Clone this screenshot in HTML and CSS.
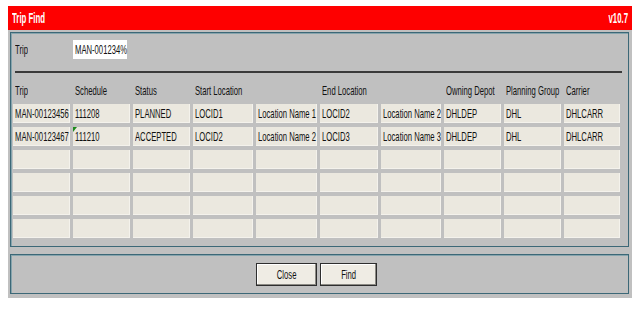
FILE: index.html
```html
<!DOCTYPE html>
<html lang="en">
<head>
  <meta charset="UTF-8">
  <title>Trip Find</title>
  <link rel="stylesheet" href="styles.css">
</head>
<body>

  <div class="window">
    <div class="titlebar">
      <span class="t">Trip Find</span>
      <span class="t right">v10.7</span>
    </div>

    <div class="client">
      <div class="panel search-panel">
        <div class="search-row">
          <label class="search-label"><span class="t">Trip</span></label>
          <div class="search-input"><span class="t">MAN-001234%</span></div>
        </div>

        <div class="separator"></div>

        <div class="grid head">
          <div class="h"><span class="t">Trip</span></div>
          <div class="h"><span class="t">Schedule</span></div>
          <div class="h"><span class="t">Status</span></div>
          <div class="h span2"><span class="t">Start Location</span></div>
          <div class="h span2"><span class="t">End Location</span></div>
          <div class="h"><span class="t">Owning Depot</span></div>
          <div class="h"><span class="t">Planning Group</span></div>
          <div class="h"><span class="t">Carrier</span></div>
        </div>

        <div class="grid rows" id="rows"></div>
      </div>

      <div class="panel button-panel">
        <button class="btn close"><span class="t mid">Close</span></button>
        <button class="btn find"><span class="t mid">Find</span></button>
      </div>
    </div>
  </div>

  <script>
    const trips = [
      ["MAN-00123456", "111208", "PLANNED", "LOCID1", "Location Name 1", "LOCID2", "Location Name 2", "DHLDEP", "DHL", "DHLCARR"],
      ["MAN-00123467", "111210", "ACCEPTED", "LOCID2", "Location Name 2", "LOCID3", "Location Name 3", "DHLDEP", "DHL", "DHLCARR"]
    ];
    const rowsEl = document.getElementById("rows");

    for (let r = 0; r < 6; r++) {
      for (let c = 0; c < 10; c++) {
        const cell = document.createElement("div");
        cell.className = "cell";
        const value = trips[r] ? trips[r][c] : "";
        if (value) {
          cell.innerHTML = `<span class="t">${value}</span>`;
        }
        // little green marker like the original grid
        if (r === 1 && c === 1) cell.classList.add("flag");
        rowsEl.appendChild(cell);
      }
    }
  </script>

</body>
</html>
```

FILE: styles.css
```css
body {
  margin: 0;
  padding: 6px 0 0 8px;
  background: #fff;
  font-family: "Liberation Sans", Arial, sans-serif;
  font-size: 13px;
  color: #111;
}

/* text in the original is very narrow */
.t {
  display: inline-block;
  white-space: nowrap;
  transform: scaleX(0.59);
  transform-origin: 0 50%;
}

.t.right {
  transform-origin: 100% 50%;
}

.t.mid {
  transform-origin: 50% 50%;
}

.window {
  width: 624px;
}

.titlebar {
  height: 24px;
  background: #fe0000;
  color: #fff;
  font-weight: bold;
  font-size: 14px;
  display: flex;
  justify-content: space-between;
  align-items: center;
  padding: 0 4px;
  box-sizing: border-box;
}

.titlebar .t {
  transform: scaleX(0.56);
}

.client {
  background: #c0c0c0;
  padding: 2px 3px 4px 2px;
}

.panel {
  border: 1px solid #3c6877;
  box-shadow: inset 1px 1px 0 #86a4ad;
}

.search-panel {
  padding: 7px 6px 8px 2px;
}

.search-row {
  display: flex;
  align-items: center;
  height: 19px;
  padding-left: 2px;
}

.search-label {
  width: 60px;
}

.search-input {
  width: 52px;
  height: 19px;
  background: #fff;
  padding-left: 2px;
  line-height: 19px;
  margin-left: -2px;
}

.separator {
  height: 2px;
  background: #3a3a3a;
  margin: 12px 0 0 2px;
}

.grid {
  display: grid;
  grid-template-columns: 57px 57px 57px 60px 61px 58px 60px 57px 57px 56px;
  column-gap: 3px;
}

.head {
  margin: 11px 0 6px;
  height: 14px;
  line-height: 14px;
}

.h {
  padding-left: 2px;
}

.span2 {
  grid-column: span 2;
}

.rows {
  row-gap: 4px;
}

.cell {
  position: relative;
  height: 19px;
  line-height: 19px;
  background: #ebe8df;
  box-shadow: inset 0 -1px 0 #f4f2ec, inset -1px 0 0 #f4f2ec;
  padding-left: 2px;
  overflow: hidden;
}

.cell.flag::before {
  content: "";
  position: absolute;
  top: 0;
  left: 0;
  border-top: 5px solid #1c8a1c;
  border-right: 4px solid transparent;
}

.button-panel {
  margin-top: 7px;
  height: 38px;
  display: flex;
  justify-content: center;
  align-items: center;
  gap: 3px;
  padding-right: 6px;
}

.btn {
  height: 23px;
  background: #efece4;
  border: 1px solid #2e2e2e;
  box-shadow: inset -1px -1px 0 #8c8a84, inset 1px 1px 0 #fff;
  font-family: inherit;
  font-size: 13px;
  color: #111;
  padding: 0;
}

.btn.close {
  width: 61px;
}

.btn.find {
  width: 57px;
}
```
